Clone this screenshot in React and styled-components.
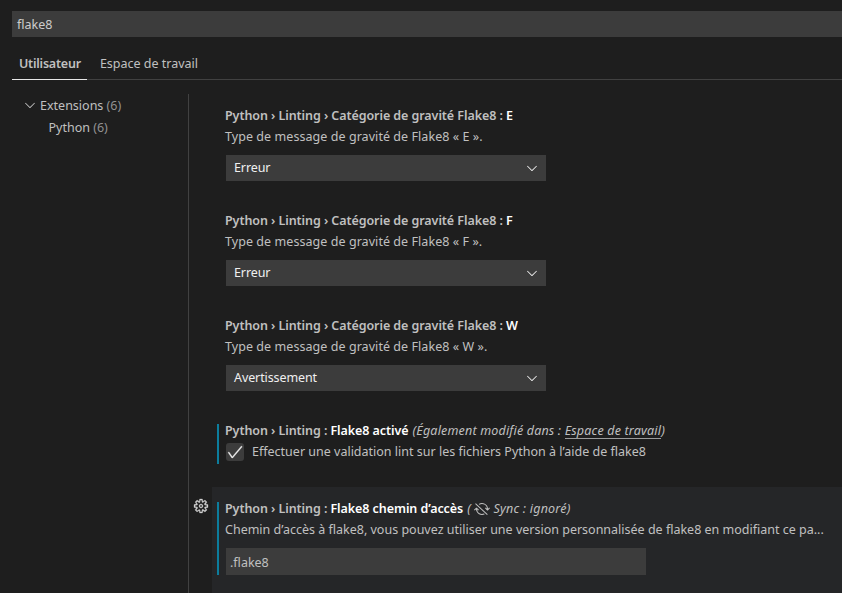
import React from 'react'

import styled, { createGlobalStyle } from 'styled-components';

import { VscCheck, VscChevronDown, VscGear, VscSyncIgnored } from 'react-icons/vsc';


const severities = [
  { code: 'E', value: 'Erreur' },
  { code: 'F', value: 'Erreur' },
  { code: 'W', value: 'Avertissement' },
];

const Setting = ({ category, label, note, modified, focused, children }) => (
  <SettingRow>
    <Gutter>{focused && <VscGear size={16} />}</Gutter>
    <SettingBody $focused={focused}>
      <SettingContent $modified={modified}>
        <SettingTitle>
          <Category>{category} </Category>
          <Label>{label}</Label>
          {note}
        </SettingTitle>
        {children}
      </SettingContent>
    </SettingBody>
  </SettingRow>
);

const App = () => {
  return (
    <>
      <GlobalStyle />
      <Page>
        <SearchBox>flake8</SearchBox>
        <Tabs>
          <Tab $active>Utilisateur</Tab>
          <Tab>Espace de travail</Tab>
        </Tabs>
        <Main>
          <Toc>
            <TocItem>
              <VscChevronDown size={16} />
              <span>Extensions <Count>(6)</Count></span>
            </TocItem>
            <TocItem $nested>
              <span>Python <Count>(6)</Count></span>
            </TocItem>
          </Toc>
          <SettingsList>
            {severities.map((s) => (
              <Setting
                key={s.code}
                category="Python › Linting › Catégorie de gravité Flake8 :"
                label={s.code}
              >
                <Description $spacing={0.06}>Type de message de gravité de Flake8 « {s.code} ».</Description>
                <Select>
                  <SelectValue>{s.value}</SelectValue>
                  <VscChevronDown size={16} />
                </Select>
              </Setting>
            ))}
            <Setting
              category="Python › Linting :"
              label="Flake8 activé"
              modified
              note={<Note $spacing={0.18}>(Également modifié dans : <NoteLink>Espace de travail</NoteLink>)</Note>}
            >
              <CheckRow>
                <Checkbox><VscCheck size={18} /></Checkbox>
                <span>Effectuer une validation lint sur les fichiers Python à l’aide de flake8</span>
              </CheckRow>
            </Setting>
            <Setting
              category="Python › Linting :"
              label="Flake8 chemin d’accès"
              modified
              focused
              note={<Note $spacing={0.22}>( <VscSyncIgnored size={16} /><SyncText>Sync : ignoré)</SyncText></Note>}
            >
              <Description>
                Chemin d’accès à flake8, vous pouvez utiliser une version personnalisée de flake8 en modifiant ce pa...
              </Description>
              <TextInput>.flake8</TextInput>
            </Setting>
          </SettingsList>
        </Main>
      </Page>
    </>
  );
};

export default App;

const GlobalStyle = createGlobalStyle`
  body {
    margin: 0;
    background: #1e1e1e;
    overflow: hidden;
  }

  * {
    box-sizing: border-box;
  }
`;

const Page = styled.div`
  display: flex;
  flex-direction: column;
  height: 593px;
  padding: 11px 0 0 12px;
  overflow: hidden;
  background: #1e1e1e;
  color: #c0c0c0;
  font-family: "Noto Sans", "Open Sans", sans-serif;
  font-size: 12.5px;
  white-space: nowrap;
`;

const SearchBox = styled.div`
  flex: none;
  height: 26px;
  padding-left: 5px;
  background: #3c3c3c;
  color: #cccccc;
  line-height: 28px;
`;

const Tabs = styled.div`
  display: flex;
  flex: none;
  gap: 6px;
  height: 43px;
  padding-top: 10px;
  border-bottom: 1px solid #414141;
`;

const Tab = styled.div`
  height: 33px;
  padding: 0 6px 0 7px;
  border-bottom: 1px solid ${(p) => (p.$active ? '#e7e7e7' : 'transparent')};
  font-weight: ${(p) => (p.$active ? 600 : 400)};
  letter-spacing: ${(p) => (p.$active ? -0.22 : 0)}px;
  line-height: 34px;
`;

const Main = styled.div`
  display: flex;
  flex: 1;
  padding-top: 14px;
`;

const Toc = styled.div`
  width: 177px;
  border-right: 1px solid #414141;
`;

const TocItem = styled.div`
  display: flex;
  align-items: center;
  gap: 2px;
  height: 22px;
  padding-left: ${(p) => (p.$nested ? 36.5 : 10)}px;
`;

const Count = styled.span`
  color: #919191;
`;

const SettingsList = styled.div`
  flex: 1;
  min-width: 0;
`;

const SettingRow = styled.div`
  display: flex;
`;

const Gutter = styled.div`
  display: flex;
  width: 23px;
  padding: 11px 0 0 4px;
  color: #d0d0d0;

  svg {
    flex: none;
    stroke-width: 0.3px;
  }
`;

const SettingBody = styled.div`
  flex: 1;
  min-width: 0;
  padding: 15px 0 18px 5px;
  background: ${(p) => (p.$focused ? '#252628' : 'transparent')};
`;

const SettingContent = styled.div`
  padding-left: 6px;
  border-left: 2px solid ${(p) => (p.$modified ? '#0c7d9d' : 'transparent')};
`;

const SettingTitle = styled.div`
  display: flex;
  align-items: center;
  height: 14px;
  margin-bottom: 7px;
  line-height: 14px;
  letter-spacing: -0.07px;
  white-space: pre;
`;

const Category = styled.span`
  font-weight: 600;
`;

const Label = styled.span`
  color: #ffffff;
  font-weight: 600;
`;

const Note = styled.span`
  display: flex;
  align-items: center;
  margin-left: 4px;
  font-style: italic;
  letter-spacing: ${(p) => p.$spacing || 0}px;
`;

const NoteLink = styled.span`
  border-bottom: 1px solid #9b9b9b;
`;

const SyncText = styled.span`
  margin-left: 3px;
`;

const Description = styled.div`
  height: 14px;
  margin-bottom: 11px;
  line-height: 14px;
  letter-spacing: ${(p) => p.$spacing || 0}px;
`;

const Select = styled.div`
  display: flex;
  align-items: center;
  justify-content: space-between;
  width: 320px;
  height: 26px;
  margin-left: 1px;
  padding: 0 6px 0 8px;
  background: #3c3c3c;
  color: #f0f0f0;
`;

const SelectValue = styled.span`
  padding-bottom: 2px;
  letter-spacing: -0.1px;
`;

const CheckRow = styled.div`
  display: flex;
  gap: 8px;
  height: 21px;
  margin: -2px 0 5px 1px;
  line-height: 18px;
`;

const Checkbox = styled.div`
  display: flex;
  align-items: center;
  justify-content: center;
  width: 18px;
  height: 18px;
  border-radius: 3px;
  background: #3c3c3c;
  color: #f0f0f0;

  svg {
    flex: none;
    stroke-width: 0.3px;
  }
`;

const TextInput = styled.div`
  width: 420px;
  height: 27px;
  margin-left: 1px;
  padding-left: 4px;
  background: #3c3c3c;
  line-height: 29px;
`;
